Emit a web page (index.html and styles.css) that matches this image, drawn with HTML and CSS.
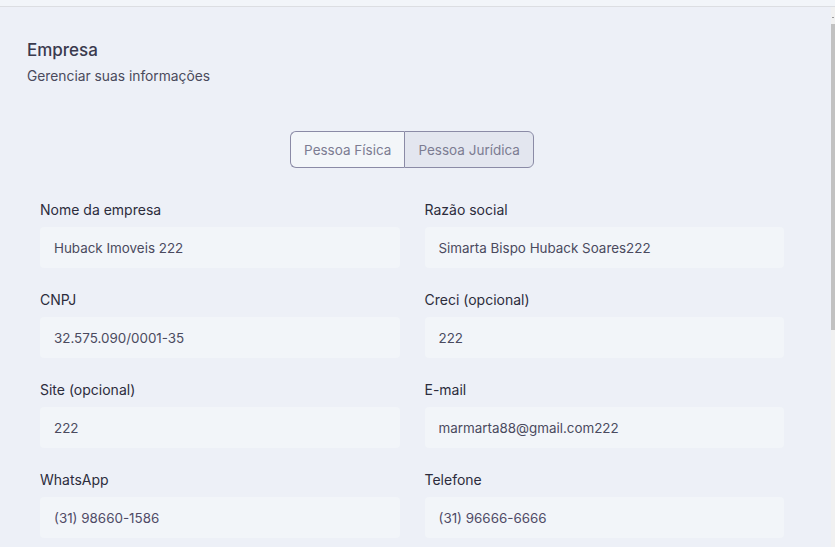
FILE: index.html
```html
<!DOCTYPE html>
<html lang="pt-BR">
<head>
    <meta charset="UTF-8">
    <meta name="viewport" content="width=device-width, initial-scale=1.0">
    <title>Empresa</title>
    <link rel="stylesheet" href="styles.css">
</head>
<body>

    <div class="topbar"></div>

    <main class="page">
        <div class="page-header">
            <h1>Empresa</h1>
            <p>Gerenciar suas informações</p>
        </div>

        <div class="toggle">
            <button class="toggle-option">Pessoa Física</button>
            <button class="toggle-option active">Pessoa Jurídica</button>
        </div>

        <form class="company-form">
            <div class="field">
                <label for="nome">Nome da empresa</label>
                <input type="text" id="nome" value="Huback Imoveis 222">
            </div>
            <div class="field">
                <label for="razao">Razão social</label>
                <input type="text" id="razao" value="Simarta Bispo Huback Soares222">
            </div>
            <div class="field">
                <label for="cnpj">CNPJ</label>
                <input type="text" id="cnpj" value="32.575.090/0001-35">
            </div>
            <div class="field">
                <label for="creci">Creci (opcional)</label>
                <input type="text" id="creci" value="222">
            </div>
            <div class="field">
                <label for="site">Site (opcional)</label>
                <input type="text" id="site" value="222">
            </div>
            <div class="field">
                <label for="email">E-mail</label>
                <input type="text" id="email" value="marmarta88@gmail.com222">
            </div>
            <div class="field">
                <label for="whatsapp">WhatsApp</label>
                <input type="text" id="whatsapp" class="phone" value="(31) 98660-1586">
            </div>
            <div class="field">
                <label for="telefone">Telefone</label>
                <input type="text" id="telefone" class="phone" value="(31) 96666-6666">
            </div>
        </form>
    </main>

    <!-- page scrollbar, drawn since the shot hides the native one -->
    <div class="scrollbar">
        <div class="scrollbar-arrow"></div>
        <div class="scrollbar-thumb"></div>
    </div>

</body>
</html>
```

FILE: styles.css
```css
html, body {
    height: 100%;
}

body {
    font-family: 'Inter', 'Noto Sans', sans-serif;
    background-color: #edf0f7;
    margin: 0;
    display: flex;
    flex-direction: column;
    overflow: hidden;
}

.topbar {
    height: 6px;
    flex-shrink: 0;
    background-color: #f2f5f9;
    border-bottom: 1px solid #dcdee2;
}

.page {
    flex: 1;
    overflow: hidden;
    padding: 31px 38px 40px 27px;
}

.scrollbar {
    position: absolute;
    top: 7px;
    right: 0;
    bottom: 0;
    width: 4px;
    background-color: #f1f1f1;
}

.scrollbar-arrow {
    width: 2px;
    height: 1px;
    margin: 10px 0 0 1px;
    background-color: #9a9a9a;
}

.scrollbar-thumb {
    height: 306px;
    margin-top: 6px;
    background-color: #c1c1c1;
}

.page-header h1 {
    margin: 0;
    font-size: 17px;
    font-weight: 500;
    line-height: 24px;
    color: #3a3a4e;
}

.page-header p {
    margin: 4px 0 0;
    font-size: 13.8px;
    line-height: 20px;
    color: #4a4a5c;
}

.toggle {
    display: flex;
    justify-content: center;
    margin: 45px 0 32px;
}

.toggle-option {
    height: 37px;
    padding: 0 13px;
    font-family: inherit;
    font-size: 13.5px;
    color: #7c7c92;
    background-color: #f3f6f9;
    border: 1px solid #8b8ba6;
    cursor: pointer;
}

.toggle-option:first-child {
    border-radius: 6px 0 0 6px;
    border-right: none;
}

.toggle-option:last-child {
    border-radius: 0 6px 6px 0;
    border-left: 1px solid #8b8ba6;
}

.toggle-option.active {
    background-color: #e3e6ef;
}

.company-form {
    display: grid;
    grid-template-columns: 1fr 1fr;
    column-gap: 25px;
    row-gap: 22px;
    padding: 0 13px;
}

.field {
    display: flex;
    flex-direction: column;
}

.field label {
    font-size: 14px;
    line-height: 20px;
    color: #2c2c3c;
    margin-bottom: 7px;
}

.field input[type="text"] {
    height: 41px;
    box-sizing: border-box;
    padding: 0 14px;
    font-family: inherit;
    font-size: 13.4px;
    color: #4a4a5e;
    background-color: #f2f5f9;
    border: none;
    border-radius: 4px;
    outline: none;
}

.field input.phone {
    color: #4f4a66;
}
```
